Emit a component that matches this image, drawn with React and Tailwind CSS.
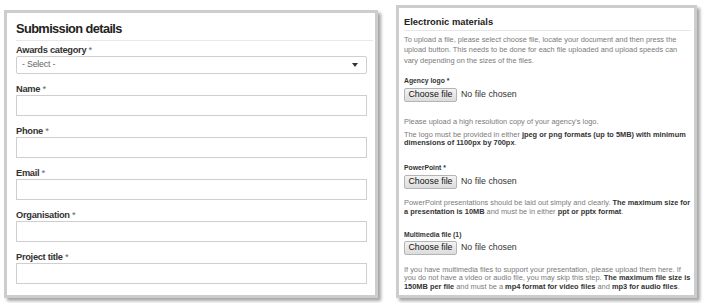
const font = { fontFamily: '"Liberation Sans", Arial, sans-serif' };

function Field({ label, first }) {
  return (
    <div className={first ? "mt-[3px]" : "mt-[9px]"}>
      <div className="text-[9.3px] leading-[12px] font-bold tracking-[-0.3px] text-[#333]">
        {label} <span className="font-normal text-[#666]">*</span>
      </div>
      <div className="h-[21px] border border-[#cfcfcf] bg-white" />
    </div>
  );
}

function FileButton() {
  return (
    <div className="flex items-center h-[14px]">
      <div className="h-[14px] w-[53px] flex items-center justify-center border border-[#b5b5b5] rounded-[2px] bg-gradient-to-b from-[#f3f3f3] to-[#dcdcdc] text-[8.8px] text-[#111]">
        Choose file
      </div>
      <span className="ml-[4px] text-[8.8px] text-[#333]">No file chosen</span>
    </div>
  );
}

export default function App() {
  return (
    <div className="w-[715px] h-[303px] bg-white flex items-start pl-[4px] gap-[18px]" style={font}>
      {/* left panel */}
      <div className="mt-[10px] w-[374px] h-[288px] border-[3px] border-[#cdcdcd] bg-white shadow-[3px_3px_3px_rgba(0,0,0,0.35)] pl-[9px] pr-[8px]">
        <div className="pt-[8px] pb-[3px] -mr-[6px] border-b border-[#e8e8e8]">
          <h1 className="text-[12.8px] leading-[16px] font-bold tracking-[-0.6px] text-[#222]">
            Submission details
          </h1>
        </div>

        <div className="mt-[3px]">
          <div className="text-[9.3px] leading-[12px] font-bold tracking-[-0.3px] text-[#333]">
            Awards category <span className="font-normal text-[#666]">*</span>
          </div>
          <div className="h-[18px] border border-[#cfcfcf] rounded-[2px] flex items-center justify-between pl-[5px] pr-[8px]">
            <span className="text-[8.8px] tracking-[-0.2px] text-[#666]">- Select -</span>
            <svg width="6" height="4" viewBox="0 0 6 4">
              <path d="M0 0 L6 0 L3 4 Z" fill="#333" />
            </svg>
          </div>
        </div>

        <Field label="Name" />
        <Field label="Phone" />
        <Field label="Email" />
        <Field label="Organisation" />
        <Field label="Project title" />
      </div>

      {/* right panel */}
      <div className="mt-[5px] w-[301px] h-[293px] border-[3px] border-[#cdcdcd] bg-white shadow-[3px_3px_3px_rgba(0,0,0,0.35)] pl-[5px] pr-[3px] text-[#7a7a7a]">
        <div className="pt-[8px] pb-[2px] border-b border-[#e6e6e6]">
          <h2 className="text-[9.4px] leading-[12px] font-bold text-[#222]">Electronic materials</h2>
        </div>

        <p className="mt-[3.5px] text-[7.4px] leading-[10.5px] whitespace-nowrap">
          To upload a file, please select choose file, locate your document and then press the
          <br />
          upload button. This needs to be done for each file uploaded and upload speeds can
          <br />
          vary depending on the sizes of the files.
        </p>

        <div className="mt-[10px] text-[6.8px] leading-[9px] font-bold text-[#333]">Agency logo *</div>
        <div className="mt-[3px]">
          <FileButton />
        </div>
        <p className="mt-[15px] text-[7.4px] leading-[9px] whitespace-nowrap">
          Please upload a high resolution copy of your agency's logo.
        </p>
        <p className="mt-[4.5px] text-[7.4px] leading-[8.5px] whitespace-nowrap">
          The logo must be provided in either{" "}
          <b className="text-[#333]">jpeg or png formats (up to 5MB) with minimum</b>
          <br />
          <b className="text-[#333]">dimensions of 1100px by 700px</b>.
        </p>

        <div className="mt-[15px] text-[6.8px] leading-[9px] font-bold text-[#333]">PowerPoint *</div>
        <div className="mt-[3px]">
          <FileButton />
        </div>
        <p className="mt-[9px] text-[7.4px] leading-[9px] whitespace-nowrap">
          PowerPoint presentations should be laid out simply and clearly.{" "}
          <b className="text-[#333]">The maximum size for</b>
          <br />
          <b className="text-[#333]">a presentation is 10MB</b> and must be in either{" "}
          <b className="text-[#333]">ppt or pptx format</b>.
        </p>

        <div className="mt-[14px] text-[6.8px] leading-[9px] font-bold text-[#333]">Multimedia file (1)</div>
        <div className="mt-[2.5px]">
          <FileButton />
        </div>
        <p className="mt-[11px] text-[7.4px] leading-[8.25px] whitespace-nowrap">
          If you have multimedia files to support your presentation, please upload them here. If
          <br />
          you do not have a video or audio file, you may skip this step.{" "}
          <b className="text-[#333]">The maximum file size is</b>
          <br />
          <b className="text-[#333]">150MB per file</b> and must be a{" "}
          <b className="text-[#333]">mp4 format for video files</b> and{" "}
          <b className="text-[#333]">mp3 for audio files</b>.
        </p>
      </div>
    </div>
  );
}
